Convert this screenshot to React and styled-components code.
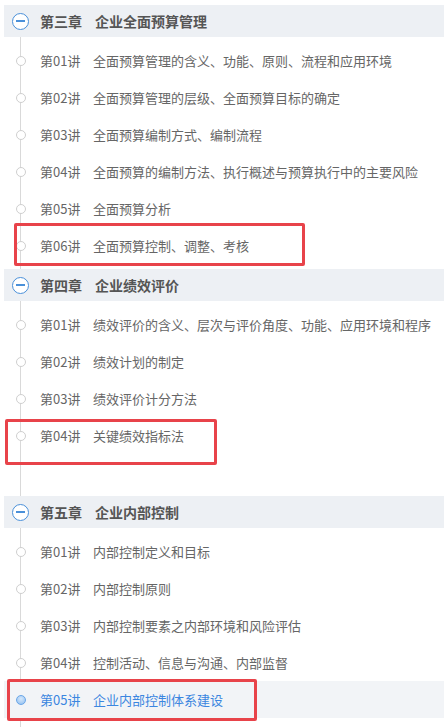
import React from 'react';
import styled, { createGlobalStyle } from 'styled-components';

const Global = createGlobalStyle`
  html, body { margin: 0; padding: 0; background: #fff; }
  body { font-family: "Noto Sans CJK SC", "Noto Sans", sans-serif; }
`;

const List = styled.div`
  position: relative;
  width: 444px;
  padding-bottom: 9px;
  &::before {
    content: '';
    position: absolute;
    left: 20px;
    top: 0;
    bottom: 0;
    width: 1px;
    background: #d9d9d9;
  }
`;

const ChapterRow = styled.div`
  position: relative;
  display: flex;
  align-items: center;
  height: 32px;
  margin: 5px 0 5px 4px;
  background: #edf0f4;
  color: #555;
  font-size: 14px;
  font-weight: bold;
`;

const ChapterIcon = styled.span`
  position: relative;
  box-sizing: border-box;
  width: 17px;
  height: 17px;
  margin-left: 8px;
  border: 1.5px solid #4a90d9;
  border-radius: 50%;
  background: #fff;
  &::after {
    content: '';
    position: absolute;
    left: 3px;
    right: 3px;
    top: 6.5px;
    height: 1.5px;
    background: #4a90d9;
  }
`;

const Num = styled.span`
  margin-left: ${p => p.$chapter ? '11px' : '14px'};
  width: ${p => p.$chapter ? '55px' : '53px'};
  flex-shrink: 0;
`;

const LessonRow = styled.div`
  position: relative;
  display: flex;
  align-items: center;
  height: 37px;
  margin-left: 4px;
  font-size: 13px;
  color: ${p => p.$active ? '#3b86e0' : '#666'};
  background: ${p => p.$active ? '#f2f4f7' : 'transparent'};
`;

const Dot = styled.span`
  box-sizing: border-box;
  width: 10px;
  height: 10px;
  margin-left: 12px;
  border-radius: 50%;
  border: 1px solid ${p => p.$active ? '#6aa6e8' : '#cfcfcf'};
  background: ${p => p.$active ? 'radial-gradient(circle at 50% 35%, #d6e8fb, #8dbdf0)' : '#fff'};
`;

const Spacer = styled.div`
  height: 37px;
`;

const Mark = styled.div`
  position: absolute;
  left: ${p => p.$l}px;
  top: ${p => p.$t}px;
  width: ${p => p.$w}px;
  height: ${p => p.$h}px;
  box-sizing: border-box;
  border: 3px solid #e8434a;
  border-radius: 2px;
  pointer-events: none;
`;

const chapters = [
  {
    num: '第三章',
    title: '企业全面预算管理',
    lessons: [
      '全面预算管理的含义、功能、原则、流程和应用环境',
      '全面预算管理的层级、全面预算目标的确定',
      '全面预算编制方式、编制流程',
      '全面预算的编制方法、执行概述与预算执行中的主要风险',
      '全面预算分析',
      '全面预算控制、调整、考核',
    ],
    mark: { index: 5, l: 10, t: -4, w: 291, h: 43 },
  },
  {
    num: '第四章',
    title: '企业绩效评价',
    lessons: [
      '绩效评价的含义、层次与评价角度、功能、应用环境和程序',
      '绩效计划的制定',
      '绩效评价计分方法',
      '关键绩效指标法',
    ],
    mark: { index: 3, l: 1, t: 2, w: 212, h: 46 },
    spacer: true,
  },
  {
    num: '第五章',
    title: '企业内部控制',
    lessons: [
      '内部控制定义和目标',
      '内部控制原则',
      '内部控制要素之内部环境和风险评估',
      '控制活动、信息与沟通、内部监督',
      '企业内部控制体系建设',
    ],
    mark: { index: 4, l: 3, t: -2, w: 250, h: 42 },
    active: 4,
  },
];

const pad = n => String(n + 1).padStart(2, '0');

export default function App() {
  return (
    <>
      <Global />
      <List>
        {chapters.map(ch => (
          <React.Fragment key={ch.num}>
            <ChapterRow>
              <ChapterIcon />
              <Num $chapter>{ch.num}</Num>
              <span>{ch.title}</span>
            </ChapterRow>
            {ch.lessons.map((l, i) => {
              const active = ch.active === i;
              const m = ch.mark && ch.mark.index === i ? ch.mark : null;
              return (
                <LessonRow key={l} $active={active}>
                  <Dot $active={active} />
                  <Num>第{pad(i)}讲</Num>
                  <span>{l}</span>
                  {m && <Mark $l={m.l} $t={m.t} $w={m.w} $h={m.h} />}
                </LessonRow>
              );
            })}
            {ch.spacer && <Spacer />}
          </React.Fragment>
        ))}
      </List>
    </>
  );
}
